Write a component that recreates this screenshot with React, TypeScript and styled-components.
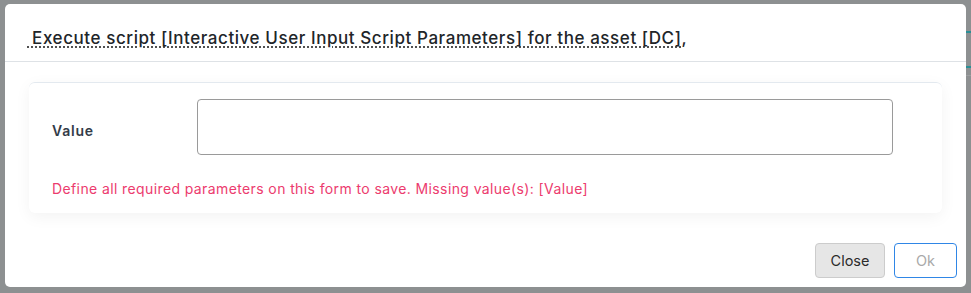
import React from "react";
import styled, { createGlobalStyle } from "styled-components";

const Global = createGlobalStyle`
  html, body { margin: 0; padding: 0; }
  body {
    width: 971px;
    height: 293px;
    overflow: hidden;
    font-family: Inter, "Open Sans", sans-serif;
    background-color: #8d9091;
    background-image:
      linear-gradient(#2a8f96, #2a8f96),
      linear-gradient(#2a8f96, #2a8f96),
      linear-gradient(#9c9fa0, #9c9fa0);
    background-repeat: no-repeat;
    background-size: 10px 2px, 10px 2px, 10px 1px;
    background-position: 966px 31px, 966px 66px, 966px 75px;
  }
`;

const Backdrop = styled.div`
  width: 971px;
  height: 293px;
  padding: 4px 5px 0 5px;
  box-sizing: border-box;
`;

const Dialog = styled.div`
  width: 961px;
  height: 283px;
  background: #ffffff;
  border-radius: 5px;
  display: flex;
  flex-direction: column;
  box-sizing: border-box;
`;

const Header = styled.div`
  height: 58px;
  box-sizing: border-box;
  display: flex;
  align-items: flex-end;
  padding: 0 0 11px 22px;
  border-bottom: 1px solid #dee2e6;
`;

const Title = styled.h5`
  margin: 0;
  font-size: 17px;
  line-height: 24px;
  font-weight: 500;
  color: #212529;
  white-space: pre;
  text-decoration: underline dotted #333;
  text-underline-offset: 3px;
  letter-spacing: 0.57px;
`;

const Body = styled.div`
  padding: 20px 24px 0 24px;
`;

const Card = styled.div`
  background: #ffffff;
  border-top: 1px solid #e3e9ef;
  border-radius: 6px;
  box-shadow: 0 4px 16px rgba(0, 0, 0, 0.05);
  padding: 16px 23px 14px 23px;
  height: 131px;
  box-sizing: border-box;
`;

const Row = styled.div`
  display: flex;
  align-items: center;
`;

const Label = styled.label`
  width: 145px;
  padding-top: 6px;
  font-size: 14px;
  font-weight: 600;
  color: #333c48;
  letter-spacing: 0.8px;
`;

const Input = styled.input`
  width: 696px;
  height: 56px;
  box-sizing: border-box;
  border: 1px solid #9a9a9a;
  border-radius: 4px;
  outline: none;
  padding: 0 12px;
  font-family: inherit;
  font-size: 14px;
`;

const ErrorText = styled.div`
  margin-top: 24px;
  font-size: 14px;
  line-height: 20px;
  color: #ec3b6e;
  letter-spacing: 0.39px;
`;

const Footer = styled.div`
  margin-top: auto;
  display: flex;
  justify-content: flex-end;
  gap: 9px;
  padding: 0 9px 9px 0;
`;

const Button = styled.button<{ $primary?: boolean }>`
  height: 35px;
  width: ${(p) => (p.$primary ? "63px" : "70px")};
  box-sizing: border-box;
  border-radius: 4px;
  font-family: inherit;
  font-size: 14.5px;
  cursor: pointer;
  border: 1px solid ${(p) => (p.$primary ? "#2f86e6" : "#cccccc")};
  background: ${(p) => (p.$primary ? "#ffffff" : "#e6e6e6")};
  color: ${(p) => (p.$primary ? "#a9a9a9" : "#2b2b2b")};
`;

export default function App() {
  return (
    <>
      <Global />
      <Backdrop>
        <Dialog>
          <Header>
            <Title>{" Execute script [Interactive User Input Script Parameters] for the asset [DC],"}</Title>
          </Header>
          <Body>
            <Card>
              <Row>
                <Label>Value</Label>
                <Input />
              </Row>
              <ErrorText>
                Define all required parameters on this form to save. Missing value(s): [Value]
              </ErrorText>
            </Card>
          </Body>
          <Footer>
            <Button>Close</Button>
            <Button $primary disabled>
              Ok
            </Button>
          </Footer>
        </Dialog>
      </Backdrop>
    </>
  );
}
